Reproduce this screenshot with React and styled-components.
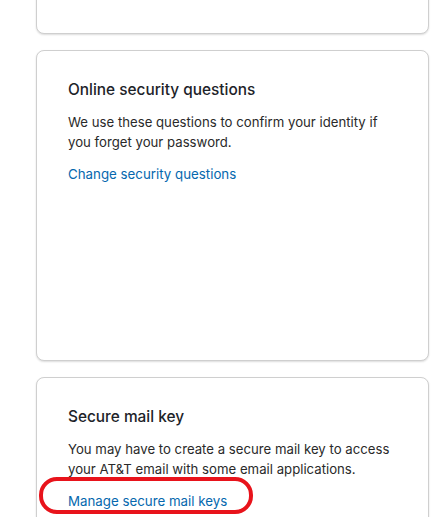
import styled, { createGlobalStyle } from 'styled-components';

const GlobalStyle = createGlobalStyle`
  html, body {
    margin: 0;
    padding: 0;
    background: #fff;
    overflow: hidden;
  }
  body {
    font-family: Inter, "Liberation Sans", sans-serif;
    color: #1d2329;
  }
`;

const Page = styled.main`
  width: 393px;
  margin: -60px 0 0 36px;
  display: flex;
  flex-direction: column;
  gap: 16px;
`;

const Card = styled.section`
  box-sizing: border-box;
  height: ${props => props.$height}px;
  padding: 29px 31px;
  border: 1px solid #cfcfcf;
  border-radius: 8px;
  background: #fff;
  box-shadow: 0 1px 2px rgba(0, 0, 0, 0.14);
`;

const Title = styled.h2`
  margin: 0 0 12px;
  font-size: 15.4px;
  line-height: 20px;
  font-weight: 500;
  color: #1d2329;
`;

const Body = styled.p`
  margin: 0 0 11px;
  font-size: 13.2px;
  line-height: 20px;
  color: #2a2a2a;
`;

const LinkWrap = styled.div`
  position: relative;
  display: inline-block;
`;

const Link = styled.a`
  font-size: 13.3px;
  line-height: 20px;
  color: #0568ae;
  text-decoration: none;
  cursor: pointer;
`;

const Highlight = styled.span`
  position: absolute;
  box-sizing: border-box;
  left: -29px;
  top: -13px;
  width: 214px;
  height: 37px;
  border: 4px solid #e8131b;
  border-radius: 18px;
  pointer-events: none;
`;

const cards = [
  {
    title: 'Online security questions',
    body: 'We use these questions to confirm your identity if you forget your password.',
    link: 'Change security questions',
    height: 311,
  },
  {
    title: 'Secure mail key',
    body: 'You may have to create a secure mail key to access your AT&T email with some email applications.',
    link: 'Manage secure mail keys',
    height: 311,
    marked: true,
  },
];

export default function App() {
  return (
    <>
      <GlobalStyle />
      <Page>
        <Card $height={94} />
        {cards.map(card => (
          <Card key={card.title} $height={card.height}>
            <Title>{card.title}</Title>
            <Body>{card.body}</Body>
            <LinkWrap>
              <Link>{card.link}</Link>
              {card.marked && <Highlight />}
            </LinkWrap>
          </Card>
        ))}
      </Page>
    </>
  );
}
